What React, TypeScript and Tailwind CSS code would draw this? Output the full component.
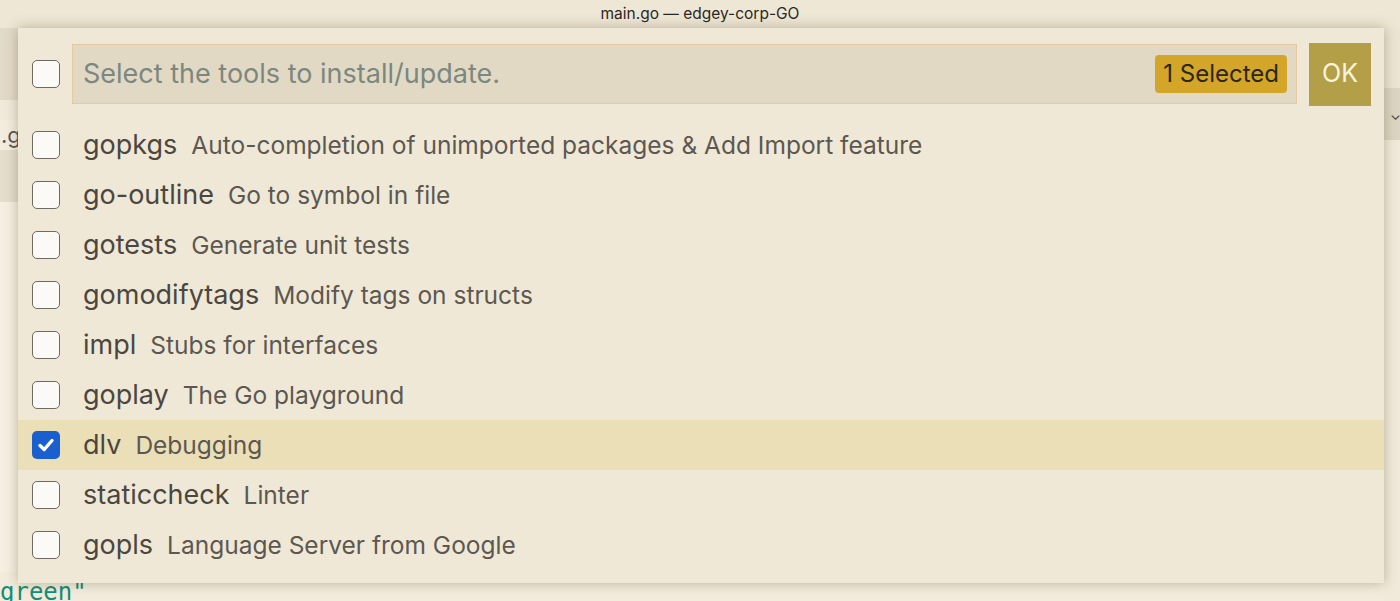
import React from "react";

const tools: { name: string; desc: string; checked?: boolean }[] = [
  { name: "gopkgs", desc: "Auto-completion of unimported packages & Add Import feature" },
  { name: "go-outline", desc: "Go to symbol in file" },
  { name: "gotests", desc: "Generate unit tests" },
  { name: "gomodifytags", desc: "Modify tags on structs" },
  { name: "impl", desc: "Stubs for interfaces" },
  { name: "goplay", desc: "The Go playground" },
  { name: "dlv", desc: "Debugging", checked: true },
  { name: "staticcheck", desc: "Linter" },
  { name: "gopls", desc: "Language Server from Google" },
];

function Box({ checked }: { checked?: boolean }) {
  if (checked) {
    return (
      <div className="w-[28px] h-[28px] rounded-[5px] bg-[#1a5fd0] flex items-center justify-center shrink-0">
        <svg width="20" height="20" viewBox="0 0 20 20">
          <path d="M4 10.5 L8.2 14.5 L16 5.5" fill="none" stroke="#fff" strokeWidth="3.4" strokeLinecap="round" strokeLinejoin="round" />
        </svg>
      </div>
    );
  }
  return <div className="w-[28px] h-[28px] rounded-[5px] border border-[#6e6a62] bg-[#fbfaf6] shrink-0" />;
}

export default function App() {
  return (
    <div className="relative w-[1400px] h-[601px] overflow-hidden bg-[#f3ecdc] font-['Inter',sans-serif]">
      {/* title bar */}
      <div className="h-[28px] bg-[#eee7d5] flex items-start justify-center pt-[2px] text-[15.5px] text-[#2a2824]">
        main.go — edgey-corp-GO
      </div>
      {/* editor background */}
      <div className="flex h-[573px]">
        <div className="flex-1 flex flex-col">
          <div className="h-[72px] bg-[#e2dac8]" />
          <div className="h-[20px] bg-[#f1eadb]" />
          <div className="h-[30px] bg-[#f4eddf] flex items-center text-[22px] text-[#555] pl-[1px]">
            <span>.g</span>
          </div>
          <div className="h-[52px] bg-[#e4ddcb]" />
          <div className="h-[370px] bg-[#f5efe1]" />
          <div className="h-[29px] flex items-end font-['DejaVu_Sans_Mono',monospace] text-[24px] leading-[26px] text-[#0f8f7a]">
            <span className="-mb-[4px]">green"</span>
          </div>
        </div>
        <div className="w-[16px] flex flex-col">
          <div className="h-[60px] bg-[#ece5d4]" />
          <div className="h-[52px] bg-[#dcd5c4] flex items-center text-[14px] text-[#444] pl-[6px]">⌄</div>
          <div className="flex-1 bg-[#f1eadb]" />
        </div>
      </div>

      {/* quick pick overlay */}
      <div className="absolute left-[18px] top-[28px] w-[1366px] h-[555px] bg-[#efe8d7] shadow-[0_0_12px_rgba(80,65,30,0.35)]">
        <div className="flex items-center h-[92px] pl-[14px] pr-[13px]">
          <Box />
          <div className="ml-[12px] flex-1 h-[60px] bg-[#e1d9c4] border border-[#e6c9a0] flex items-center pl-[10px] pr-[9px]">
            <span className="flex-1 text-[27px] text-[#7c877f]">Select the tools to install/update.</span>
            <span className="h-[38px] px-[8px] rounded-[4px] bg-[#d3a629] text-[#2b2612] text-[24px] flex items-center">1 Selected</span>
          </div>
          <div className="ml-[12px] w-[62px] h-[63px] bg-[#b39f48] flex items-center justify-center text-[25px] text-[#fbf5df]">
            OK
          </div>
        </div>
        <div className="flex flex-col">
          {tools.map((t) => (
            <div
              key={t.name}
              className={`h-[50px] flex items-center pl-[14px] ${t.checked ? "bg-[#ebdfb8]" : ""}`}
            >
              <Box checked={t.checked} />
              <span className="ml-[23px] text-[27px] text-[#4b4740]">{t.name}</span>
              <span className="ml-[14px] text-[24.5px] text-[#5c5851]">{t.desc}</span>
            </div>
          ))}
        </div>
      </div>
    </div>
  );
}
